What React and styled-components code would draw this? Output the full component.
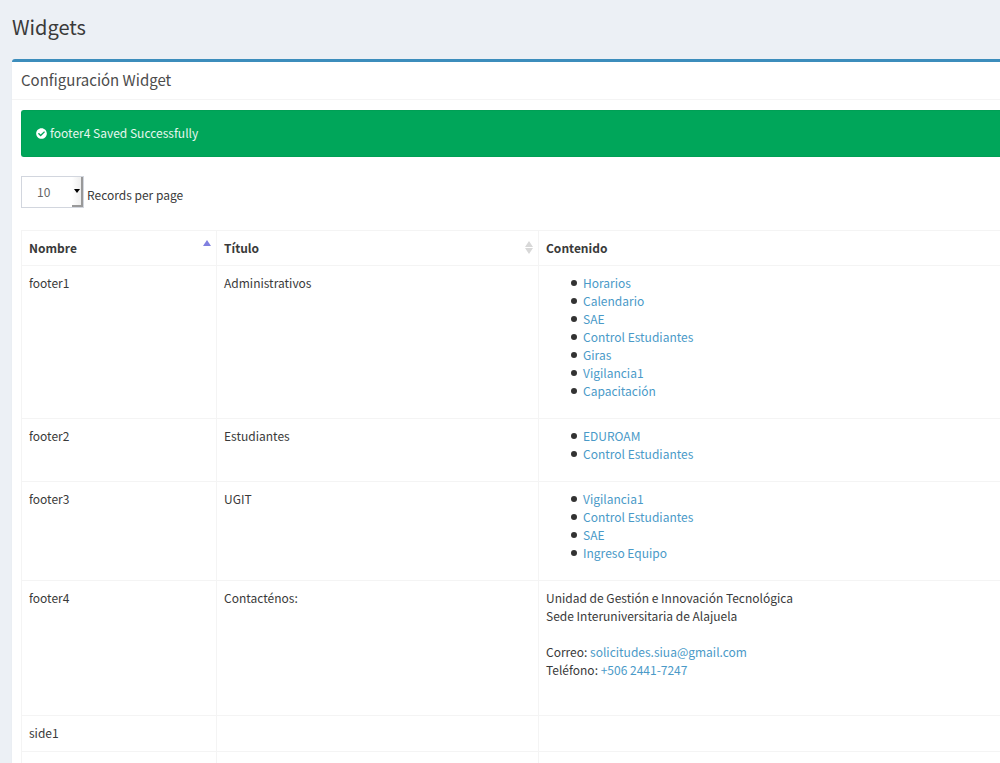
import React from 'react'
import styled, { createGlobalStyle } from 'styled-components'
import { FaCheckCircle } from 'react-icons/fa'

const GlobalStyle = createGlobalStyle`
    * {
        box-sizing: border-box;
    }
    body {
        margin: 0;
        background: #ecf0f5;
        color: #3a3a3a;
        font-family: 'Noto Sans CJK SC', 'Noto Sans', sans-serif;
        font-size: 12px;
        line-height: 18px;
        overflow: hidden;
    }
`
const Page = styled.main`
    min-height: 100vh;
    padding: 13px 0 0 12px;
`
const PageTitle = styled.h1`
    margin: 0 0 18px;
    font-size: 20px;
    line-height: 28px;
    font-weight: 400;
`
const Box = styled.section`
    background: #fff;
    border-top: 3px solid #3c8dbc;
    border-radius: 3px 0 0 0;
    box-shadow: 0 1px 1px rgba(0, 0, 0, 0.1);
`
const BoxHeader = styled.header`
    padding: 8px 9px 9px;
    border-bottom: 1px solid #f4f4f4;
`
const BoxTitle = styled.h2`
    margin: 0;
    color: #4c4c4c;
    font-size: 15px;
    line-height: 20px;
    font-weight: 400;
`
const BoxBody = styled.div`
    padding: 10px 0 0 9px;
`
const Alert = styled.div`
    display: flex;
    align-items: center;
    gap: 3px;
    margin-bottom: 19px;
    padding: 13px 14px 14px;
    border: 1px solid #009f55;
    border-right: 0;
    border-radius: 3px 0 0 3px;
    background: #00a65a;
    color: #fff;
`
const AlertText = styled.span`
    color: #e6f6ee;
`
const Length = styled.div`
    display: flex;
    align-items: flex-end;
    gap: 3px;
    margin-bottom: 22px;
`
const LengthLabel = styled.label`
    padding-bottom: 4px;
`
const SelectWrap = styled.div`
    position: relative;
`
const Select = styled.select`
    display: block;
    appearance: none;
    width: 63px;
    height: 32px;
    padding: 0 15px;
    border: 1px solid #d2d6de;
    border-radius: 0;
    background: #fff;
    color: #666;
    font: inherit;
`
const SelectButton = styled.span`
    position: absolute;
    top: 1px;
    right: 1px;
    bottom: 1px;
    width: 11px;
    border-right: 2px solid #999;
    border-bottom: 2px solid #999;
    background: linear-gradient(to right, #fff, #eee);
    pointer-events: none;
    &::after {
        content: '';
        position: absolute;
        top: 12px;
        right: 1px;
        border: 3px solid transparent;
        border-top: 4px solid #000;
        border-bottom: 0;
    }
`
const Table = styled.table`
    width: 100%;
    border-collapse: collapse;
    table-layout: fixed;
`
const HeadCell = styled.th`
    width: ${props => props.$width || 'auto'};
    padding: 8px 8px 8px 7px;
    border: 1px solid #f4f4f4;
    border-right-width: ${props => (props.$last ? '0' : '1px')};
    text-align: left;
    font-weight: 700;
`
const HeadContent = styled.div`
    display: flex;
    justify-content: space-between;
`
const Cell = styled.td`
    height: 36px;
    padding: 8px 8px 8px 7px;
    border: 1px solid #f4f4f4;
    border-right-width: ${props => (props.$last ? '0' : '1px')};
    vertical-align: top;
`
const SortButton = styled.button`
    display: flex;
    align-items: ${props => (props.$sorted ? 'flex-start' : 'center')};
    padding: 0;
    border: 0;
    background: none;
    margin-right: -3px;
`
const LinkList = styled.ul`
    margin: 0 0 10px;
    padding-left: 25px;
    list-style: none;
`
const LinkItem = styled.li`
    display: flex;
    align-items: center;
    gap: 6px;
    &::before {
        content: '';
        width: 6px;
        height: 6px;
        border-radius: 50%;
        background: #333;
    }
`
const Anchor = styled.a`
    color: #4a9ac8;
    text-decoration: none;
`
const Paragraph = styled.p`
    margin: 0 0 10px;
`

const footers = [
    {
        name: 'footer1',
        title: 'Administrativos',
        links: ['Horarios', 'Calendario', 'SAE', 'Control Estudiantes', 'Giras', 'Vigilancia1', 'Capacitación'],
    },
    { name: 'footer2', title: 'Estudiantes', links: ['EDUROAM', 'Control Estudiantes'] },
    { name: 'footer3', title: 'UGIT', links: ['Vigilancia1', 'Control Estudiantes', 'SAE', 'Ingreso Equipo'] },
    { name: 'footer4', title: 'Contacténos:', contact: true },
    { name: 'side1', title: '' },
    { name: '', title: '' },
]

function SortIcon({ sorted }) {
    if (sorted) {
        return (
            <svg width="8" height="10" viewBox="0 0 8 10">
                <path d="M4 1L8 7H0z" fill="#8080e0" />
            </svg>
        )
    }
    return (
        <svg width="8" height="14" viewBox="0 0 8 14">
            <path d="M4 0L8 6H0zM0 7H8L4 13z" fill="#d8d8d8" />
        </svg>
    )
}

function Contact() {
    return (
        <Paragraph>
            Unidad de Gestión e Innovación Tecnológica<br />
            Sede Interuniversitaria de Alajuela<br />
            <br />
            Correo: <Anchor href="mailto:solicitudes.siua@gmail.com">solicitudes.siua@gmail.com</Anchor><br />
            Teléfono: <Anchor href="tel:+50624417247">+506 2441-7247</Anchor><br />
            <br />
        </Paragraph>
    )
}

export default function App() {
    return (
        <Page>
            <GlobalStyle />
            <PageTitle>Widgets</PageTitle>
            <Box>
                <BoxHeader>
                    <BoxTitle>Configuración Widget</BoxTitle>
                </BoxHeader>
                <BoxBody>
                    <Alert role="status">
                        <FaCheckCircle size={11} />
                        <AlertText>footer4 Saved Successfully</AlertText>
                    </Alert>
                    <Length>
                        <SelectWrap>
                            <Select id="length" defaultValue="10">
                                <option>10</option>
                                <option>25</option>
                                <option>50</option>
                            </Select>
                            <SelectButton />
                        </SelectWrap>
                        <LengthLabel htmlFor="length">Records per page</LengthLabel>
                    </Length>
                    <Table>
                        <thead>
                            <tr>
                                <HeadCell $width="195px">
                                    <HeadContent>
                                        Nombre
                                        <SortButton $sorted aria-label="Nombre"><SortIcon sorted /></SortButton>
                                    </HeadContent>
                                </HeadCell>
                                <HeadCell $width="322px">
                                    <HeadContent>
                                        Título
                                        <SortButton aria-label="Título"><SortIcon /></SortButton>
                                    </HeadContent>
                                </HeadCell>
                                <HeadCell $last>Contenido</HeadCell>
                            </tr>
                        </thead>
                        <tbody>
                            {footers.map((item, index) => (
                                <tr key={index}>
                                    <Cell>{item.name}</Cell>
                                    <Cell>{item.title}</Cell>
                                    <Cell $last>
                                        {item.links && (
                                            <LinkList>
                                                {item.links.map(link => (
                                                    <LinkItem key={link}><Anchor href="#">{link}</Anchor></LinkItem>
                                                ))}
                                            </LinkList>
                                        )}
                                        {item.contact && <Contact />}
                                    </Cell>
                                </tr>
                            ))}
                        </tbody>
                    </Table>
                </BoxBody>
            </Box>
        </Page>
    )
}
